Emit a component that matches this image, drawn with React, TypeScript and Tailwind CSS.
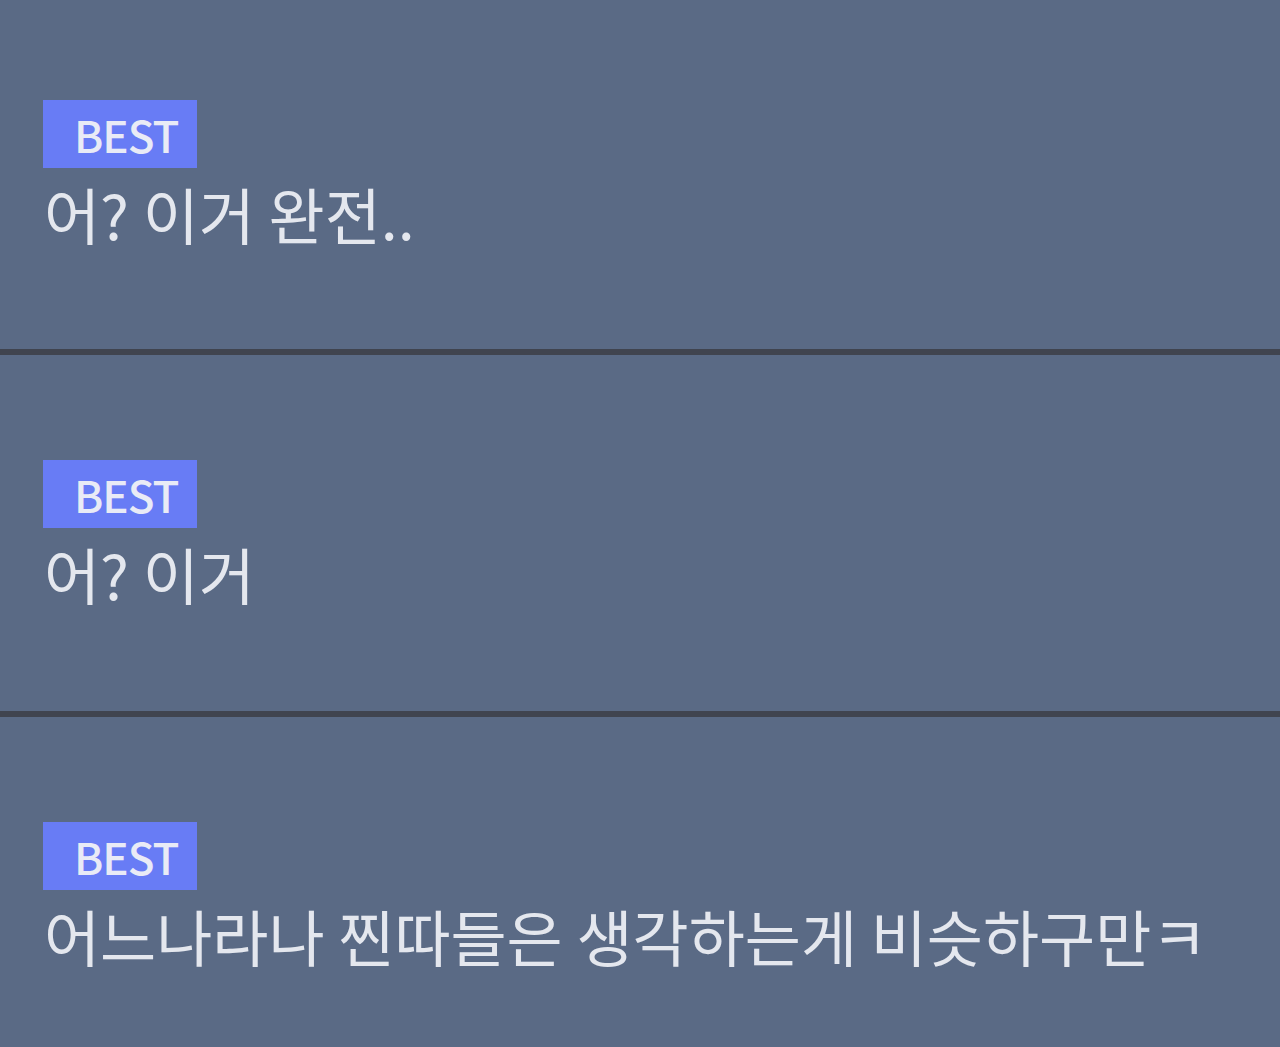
import React from "react";

const comments = [
  { id: 1, text: "어? 이거 완전.." },
  { id: 2, text: "어? 이거" },
  { id: 3, text: "어느나라나 찐따들은 생각하는게 비슷하구만ㅋ" },
];

const BestBadge = () => (
  <div className="flex h-[68px] w-[154px] items-center bg-[#687cf5] pl-[31px] text-[44px] font-medium leading-none tracking-[-1px] text-[#e9ebf6]">
    BEST
  </div>
);

const App: React.FC = () => {
  return (
    <div
      className="flex h-[1047px] w-[1280px] flex-col overflow-hidden bg-[#5a6a85]"
      style={{ fontFamily: '"Noto Sans CJK KR", "Noto Sans", sans-serif' }}
    >
      {comments.map((c, i) => (
        <React.Fragment key={c.id}>
          {i > 0 && <div className="h-[6px] shrink-0 bg-[#40444f]" />}
          <div className={`shrink-0 px-[43px] ${i === 0 ? "h-[349px] pt-[100px]" : "h-[356px] pt-[105px]"}`}>
            <BestBadge />
            <p className="mt-[12px] pl-[1px] text-[61px] font-normal leading-[68px] text-[#e4e7ee]">{c.text}</p>
          </div>
        </React.Fragment>
      ))}
    </div>
  );
};

export default App;
